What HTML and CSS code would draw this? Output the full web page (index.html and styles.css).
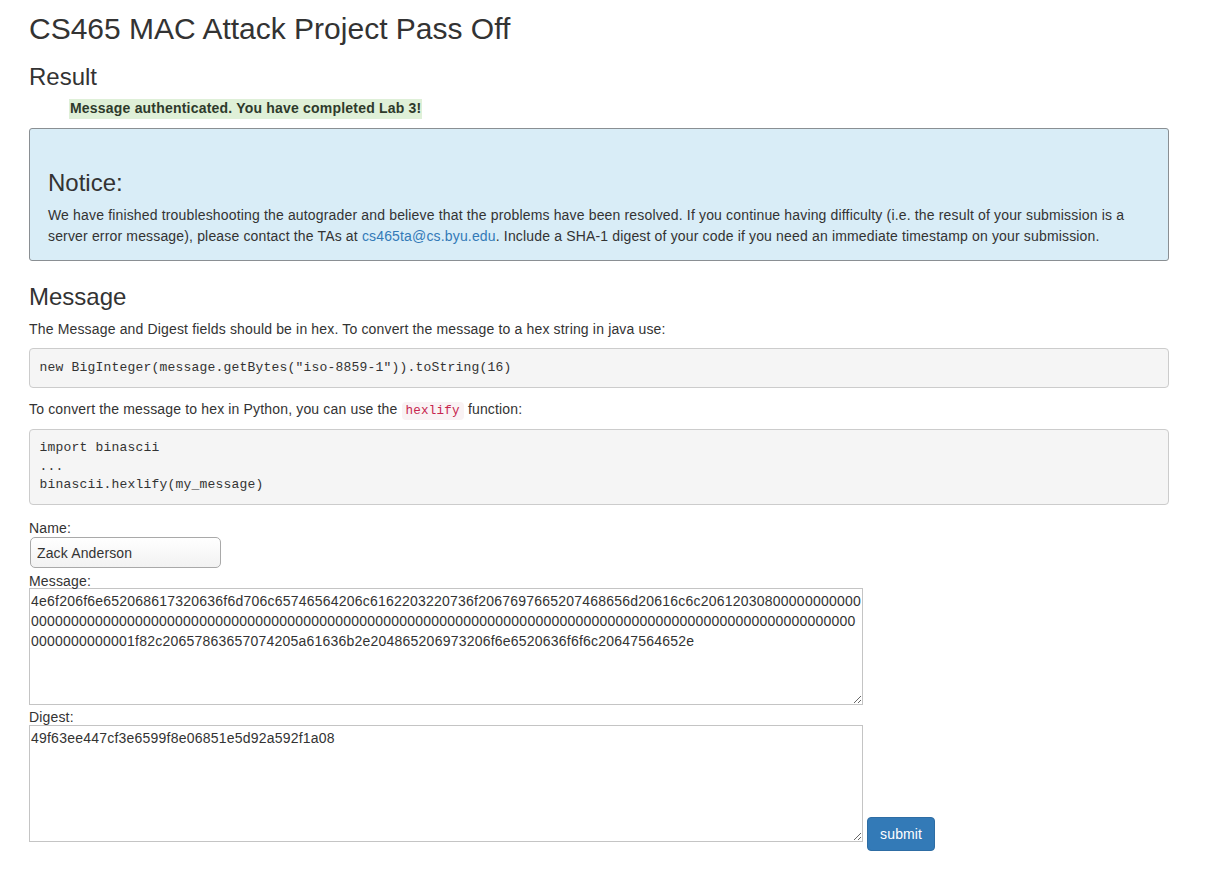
FILE: index.html
```html
<!DOCTYPE html>
<html>
<head>
<meta charset="utf-8">
<title>CS465 MAC Attack Project Pass Off</title>
<link rel="stylesheet" href="styles.css">
</head>
<body>
<div class="container">
  <h2 class="title">CS465 MAC Attack Project Pass Off</h2>
  <h3 class="section">Result</h3>
  <div class="result"><span class="success">Message authenticated. You have completed Lab 3!</span></div>
  <div class="notice">
    <h3 class="notice-title">Notice:</h3>
    <p class="notice-text">We have finished troubleshooting the autograder and believe that the problems have been resolved. If you continue having difficulty (i.e. the result of your submission is a server error message), please contact the TAs at <a class="link" href="#">cs465ta@cs.byu.edu</a>. Include a SHA-1 digest of your code if you need an immediate timestamp on your submission.</p>
  </div>
  <h3 class="section msg-head">Message</h3>
  <p class="para para-first">The Message and Digest fields should be in hex. To convert the message to a hex string in java use:</p>
  <pre class="code">new BigInteger(message.getBytes("iso-8859-1")).toString(16)</pre>
  <p class="para">To convert the message to hex in Python, you can use the <code class="inline-code">hexlify</code> function:</p>
  <pre class="code">import binascii
...
binascii.hexlify(my_message)</pre>
  <form class="form">
    <label class="label">Name:</label>
    <input class="name-input" type="text" value="Zack Anderson">
    <label class="label">Message:</label>
    <textarea class="area area-msg" id="message">4e6f206f6e652068617320636f6d706c65746564206c6162203220736f2067697665207468656d20616c6c20612030800000000000000000000000000000000000000000000000000000000000000000000000000000000000000000000000000000000000000000000000000000000001f82c20657863657074205a61636b2e204865206973206f6e6520636f6f6c20647564652e</textarea>
    <label class="label">Digest:</label>
    <div class="digest-row"><textarea class="area area-digest">49f63ee447cf3e6599f8e06851e5d92a592f1a08</textarea> <button class="btn" type="button">submit</button></div>
  </form>
</div>
<script src="script.js"></script>
</body>
</html>
```
FILE: styles.css
```css
html, body {
  margin: 0;
  padding: 0;
  background: #fff;
}
body {
  font-family: "Liberation Sans", Arial, sans-serif;
  font-size: 14px;
  line-height: 1.42857;
  color: #333;
  letter-spacing: 0.16px;
}
.container {
  width: 1140px;
  padding-left: 29px;
  padding-bottom: 30px;
}
.title {
  font-size: 30px;
  font-weight: 500;
  line-height: 1.1;
  margin: 12px 0 0;
  letter-spacing: 0;
}
.section {
  font-size: 24px;
  font-weight: 500;
  line-height: 1.1;
  margin: 19px 0 0;
  letter-spacing: 0;
}
.result {
  padding-left: 40px;
  margin-top: 9px;
}
.success {
  display: inline-block;
  background: #dff0d8;
  font-weight: bold;
  color: #2e3a2b;
  padding: 0 1px;
  letter-spacing: 0.2px;
}
.notice {
  margin-top: 9px;
  background: #d9edf7;
  border: 1px solid #8a8f93;
  border-radius: 3px;
  padding: 1px 18px 13px;
}
.notice-title {
  font-size: 24px;
  font-weight: 500;
  line-height: 1.1;
  margin: 40px 0 8px;
  letter-spacing: 0;
}
.notice-text {
  margin: 0;
  line-height: 21px;
}
.link {
  color: #337ab7;
  text-decoration: none;
}
.msg-head {
  margin-top: 23px;
}
.para {
  margin: 12px 0 8px;
}
.para-first {
  margin-top: 10px;
}
.code {
  font-family: "Liberation Mono", "Courier New", monospace;
  font-size: 13px;
  line-height: 1.42857;
  letter-spacing: 0.2px;
  background: #f5f5f5;
  border: 1px solid #ccc;
  border-radius: 4px;
  padding: 9.5px;
  margin: 0 0 10px;
  color: #333;
  width: 1119px;
}
.inline-code {
  font-family: "Liberation Mono", "Courier New", monospace;
  font-size: 90%;
  letter-spacing: 0.2px;
  color: #c7254e;
  background: #f9f2f4;
  border-radius: 4px;
  padding: 2px 4px;
}
.form {
  margin-top: 13px;
}
.label {
  display: block;
  line-height: 20px;
}
.name-input {
  display: block;
  box-sizing: border-box;
  width: 191px;
  height: 31px;
  margin: -1px 0 3px 1px;
  padding: 0 6px;
  font-family: "Liberation Sans", Arial, sans-serif;
  font-size: 14px;
  letter-spacing: 0.14px;
  color: #333;
  border: 1px solid #a9a9a9;
  border-radius: 5px;
  background: linear-gradient(#ffffff, #f2f2f2);
  outline: none;
}
.area {
  box-sizing: border-box;
  width: 834px;
  height: 117px;
  padding: 2px 1px;
  font-family: "Liberation Sans", Arial, sans-serif;
  font-size: 14px;
  line-height: 20px;
  letter-spacing: 0.22px;
  color: #333;
  border: 1px solid #c4c4c4;
  resize: both;
}
.area-msg {
  display: block;
  margin: -3px 0 2px;
}
.digest-row {
  line-height: 20px;
  margin-top: -2px;
}
.area-digest {
  display: inline-block;
  margin: 0;
  vertical-align: baseline;
}
.btn {
  display: inline-block;
  font-family: "Liberation Sans", Arial, sans-serif;
  font-size: 14px;
  line-height: 20px;
  letter-spacing: 0.14px;
  color: #fff;
  background: #337ab7;
  border: 1px solid #2e6da4;
  border-radius: 4px;
  padding: 6px 12px;
  margin-left: 0;
  vertical-align: 3px;
}
```
FILE: script.js
```js
(function () {
  var text = "No one has completed lab 2 so give them all a 0";
  var prefix = "";
  for (var i = 0; i < text.length; i++) {
    prefix += text.charCodeAt(i).toString(16);
  }
  var padding = "80" + "0".repeat(125) + "1f8";
  var extra = ", except Zack. He is one cool dude.";
  var suffix = "";
  for (var j = 0; j < extra.length; j++) {
    suffix += extra.charCodeAt(j).toString(16);
  }
  document.getElementById("message").value = prefix + padding + suffix;
})();
```
